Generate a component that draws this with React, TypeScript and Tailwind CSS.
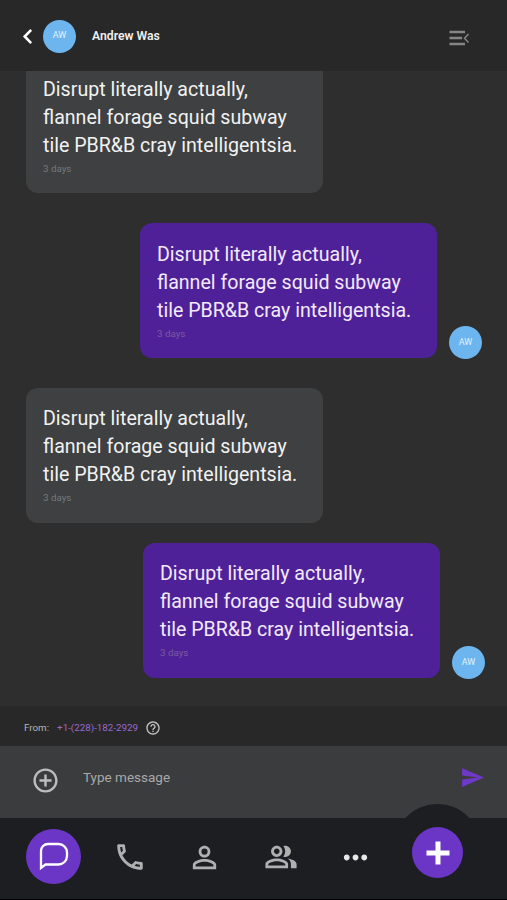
import React from "react";
import { FaChevronLeft } from "react-icons/fa";
import {
  MdAddCircleOutline,
  MdHelpOutline,
  MdMoreHoriz,
  MdOutlineLocalPhone,
  MdOutlinePeopleAlt,
  MdPersonOutline,
  MdSend,
} from "react-icons/md";

type Message = {
  text: string;
  time: string;
  mine: boolean;
  row: string;
  pad: string;
};

const text =
  "Disrupt literally actually, flannel forage squid subway tile PBR&B cray intelligentsia.";

const messages: Message[] = [
  { text, time: "3 days", mine: false, row: "pl-[26px] -mt-[13px]", pad: "pt-[18px]" },
  { text, time: "3 days", mine: true, row: "pl-[140px] mt-[30px]", pad: "pt-[18px]" },
  { text, time: "3 days", mine: false, row: "pl-[26px] mt-[30px]", pad: "pt-[17px]" },
  { text, time: "3 days", mine: true, row: "pl-[143px] mt-[20px]", pad: "pt-[17px]" },
];

const Avatar: React.FC = () => (
  <div className="w-[33px] h-[33px] shrink-0 rounded-full bg-[#6db5ee] text-[#e4f2fc] text-[9px] flex items-center justify-center">
    AW
  </div>
);

const Bubble: React.FC<{ message: Message }> = ({ message }) => (
  <div className={`flex items-end shrink-0 ${message.row}`}>
    <div
      className={`w-[297px] h-[135px] shrink-0 rounded-xl pl-[17px] ${message.pad} ${
        message.mine ? "bg-[#4f2199] text-[#f3eafc]" : "bg-[#3e4041] text-[#f2f2f2]"
      }`}
    >
      <p className="w-[262px] text-[19.6px] leading-[28px]">{message.text}</p>
      <p
        className={`text-[9.8px] leading-[18px] ${
          message.mine ? "text-[#7b5b9f]" : "text-[#77797a]"
        }`}
      >
        {message.time}
      </p>
    </div>
    {message.mine && (
      <div className="ml-[12px] -mb-px">
        <Avatar />
      </div>
    )}
  </div>
);

const Header: React.FC = () => (
  <header className="h-[71px] shrink-0 bg-[#282828] flex items-center pl-[19px] pr-[37px] pt-px">
    <button aria-label="Back" className="text-white text-[17px]">
      <FaChevronLeft />
    </button>
    <div className="ml-[7px]">
      <Avatar />
    </div>
    <h1 className="ml-[16px] text-[12.2px] font-semibold text-[#f0f0f0]">Andrew Was</h1>
    <button aria-label="Menu" className="ml-auto mt-[3px] text-[#858585]">
      <svg width="21" height="16" viewBox="0 0 21 16" fill="none" stroke="currentColor">
        <path d="M.5 2H16M.5 8H13M.5 14H16" strokeWidth="2.5" />
        <path d="M19.5 4L15.5 8.2L19.5 12.4" strokeWidth="1.5" />
      </svg>
    </button>
  </header>
);

const Composer: React.FC = () => (
  <div>
    <div className="h-[40px] bg-[#282828] flex items-center pl-[24px] pt-[4px] text-[9.8px]">
      <span className="text-[#b5b5b5]">From:</span>
      <span className="ml-[8px] text-[#9a68cf]">+1-(228)-182-2929</span>
      <MdHelpOutline className="ml-[7px] text-[16px] text-[#c4c4c4]" />
    </div>
    <div className="h-[72px] bg-[#3b3c3e] flex items-center pl-[31px] pr-[22px]">
      <button aria-label="Attach" className="text-[29px] text-[#bdbdbd] mt-[-3px]">
        <MdAddCircleOutline />
      </button>
      <span className="ml-[23px] mt-[-10px] text-[13.5px] text-[#a9a9a9]">Type message</span>
      <button aria-label="Send" className="ml-auto mt-[-10px] text-[25px] text-[#6e38c8]">
        <MdSend />
      </button>
    </div>
  </div>
);

const BottomNav: React.FC = () => (
  <nav className="relative h-[82px] shrink-0 bg-[#1d1e22] border-b border-black flex items-center pl-[26px] pb-[3px]">
    {/* bump behind the floating button */}
    <div className="absolute left-[394px] top-[-14px] w-[87px] h-[87px] rounded-full bg-[#1d1e22]" />
    <button
      aria-label="Messages"
      className="w-[55px] h-[55px] -mt-[2px] rounded-full bg-[#6b35c6] flex items-center justify-center"
    >
      <svg width="30" height="29" viewBox="0 0 30 29" fill="none" stroke="white" strokeWidth="2.3">
        <path d="M2 26V9A7 7 0 0 1 9 2H19A8.5 8.5 0 0 1 28 10.5V14A8.5 8.5 0 0 1 19.5 22.5H6.5Z" />
      </svg>
    </button>
    <button aria-label="Calls" className="ml-[32px] text-[34px] text-[#b0b0b1]">
      <MdOutlineLocalPhone />
    </button>
    <button aria-label="Contact" className="ml-[40px] text-[35px] text-[#b0b0b1]">
      <MdPersonOutline />
    </button>
    <button aria-label="Groups" className="ml-[42px] text-[34px] text-[#b0b0b1]">
      <MdOutlinePeopleAlt />
    </button>
    <button aria-label="More" className="ml-[40px] text-[35px] text-[#e8e8e8]">
      <MdMoreHoriz />
    </button>
    <button
      aria-label="New"
      className="absolute left-[412px] top-[9px] w-[51px] h-[51px] rounded-full bg-[#6b35c6] flex items-center justify-center"
    >
      <svg width="24" height="24" viewBox="0 0 24 24" stroke="white" strokeWidth="5">
        <path d="M12 .5V23.5M.5 12H23.5" />
      </svg>
    </button>
  </nav>
);

const App: React.FC = () => {
  return (
    <div className="w-[507px] h-[900px] bg-[#2e2e2e] flex flex-col overflow-hidden font-['Roboto',sans-serif]">
      <Header />
      <main className="flex-1 overflow-hidden flex flex-col">
        {messages.map((message, i) => (
          <Bubble key={i} message={message} />
        ))}
      </main>
      <Composer />
      <BottomNav />
    </div>
  );
};

export default App;
